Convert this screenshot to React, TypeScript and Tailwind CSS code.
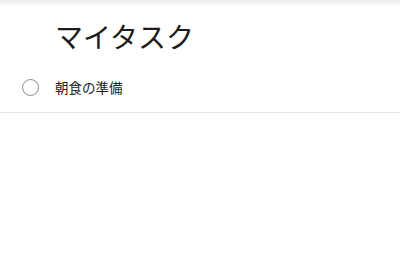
const FONT = { fontFamily: '"Noto Sans CJK JP", "Noto Sans", sans-serif' };

type Task = { id: number; title: string; done: boolean };

const tasks: Task[] = [{ id: 1, title: "朝食の準備", done: false }];

export default function App() {
  return (
    <div className="w-[400px] h-[272px] bg-white overflow-hidden" style={FONT}>
      {/* shadow from the bar above */}
      <div className="h-[6px] bg-gradient-to-b from-[#ececec] to-white" />

      <h1 className="pl-[55px] pt-[10px] h-[56px] text-[28px] leading-[40px] text-[#1c1c1c] font-normal">
        マイタスク
      </h1>

      <ul>
        {tasks.map((t) => (
          <li key={t.id} className="flex items-center h-[51px] pl-[22px] border-b border-[#e6e6e6]">
            <span className="block w-[17px] h-[17px] mr-[16px] rounded-full border-[1.5px] border-[#8a8a8a]" />
            <span className="text-[13.5px] text-[#222]">{t.title}</span>
          </li>
        ))}
      </ul>
    </div>
  );
}
